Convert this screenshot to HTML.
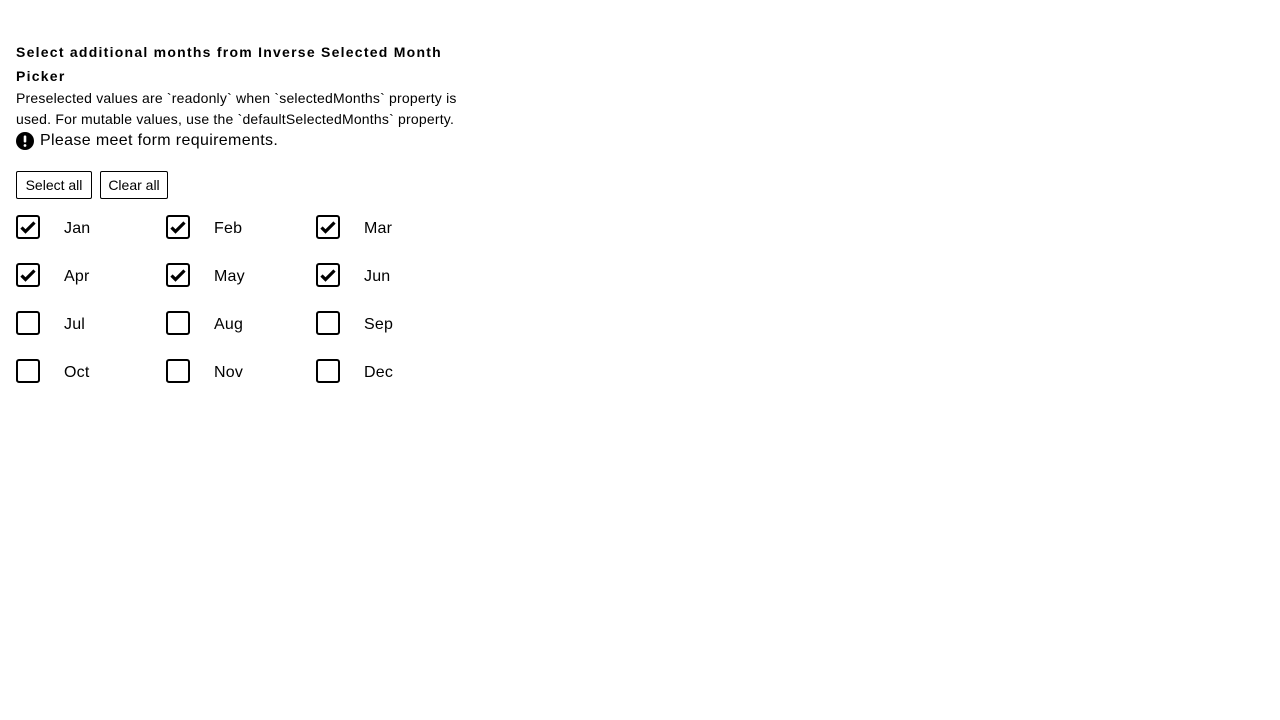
<!DOCTYPE html>
<html><head><style>
body{margin:0;background:#fff;font-family:"Liberation Sans",sans-serif;color:#000;}
.wrap{position:absolute;left:16px;top:40px;width:470px;}
h1{font-size:14px;font-weight:bold;letter-spacing:1.25px;line-height:24px;margin:0;width:445px;}
.desc{font-size:14px;line-height:21px;letter-spacing:0.2px;white-space:nowrap;}
.err{font-size:16px;line-height:22px;display:flex;align-items:center;gap:6px;letter-spacing:0.35px;}
.btn{position:absolute;top:171px;height:28px;box-sizing:border-box;border:1px solid #000;border-radius:2px;font-size:14px;line-height:26px;text-align:center;white-space:nowrap;}
.cb{position:absolute;width:24px;height:24px;box-sizing:border-box;border:2px solid #000;border-radius:3px;}
.lb{position:absolute;font-size:16px;line-height:24px;letter-spacing:0.2px;}
</style></head><body>
<div class="wrap">
<h1>Select additional months from Inverse Selected Month Picker</h1>
<div class="desc">Preselected values are `readonly` when `selectedMonths` property is<br>used. For mutable values, use the `defaultSelectedMonths` property.</div>
<div class="err"><svg width="18" height="18" viewBox="0 0 18 18"><circle cx="9" cy="9" r="9" fill="#000"/><rect x="7.7" y="3.5" width="2.6" height="7" rx="1" fill="#fff"/><circle cx="9" cy="13.5" r="1.4" fill="#fff"/></svg>Please meet form requirements.</div>
</div>
<div class="btn" style="left:16px;width:76px">Select all</div>
<div class="btn" style="left:100px;width:68px">Clear all</div>
<div id="g"></div>
<script>
var m=["Jan","Feb","Mar","Apr","May","Jun","Jul","Aug","Sep","Oct","Nov","Dec"],h="";
for(var i=0;i<12;i++){var x=16+150*(i%3),y=215+48*Math.floor(i/3);
h+='<div class="cb" style="left:'+x+'px;top:'+y+'px">'+(i<6?'<svg width="20" height="20" viewBox="0 0 20 20" style="position:absolute;left:0;top:0"><path d="M3.5 10.5l4 4 9-9" fill="none" stroke="#000" stroke-width="3.2"/></svg>':'')+'</div><div class="lb" style="left:'+(x+48)+'px;top:'+(y+2)+'px">'+m[i]+'</div>';}
document.getElementById("g").innerHTML=h;
</script>
</body></html>
